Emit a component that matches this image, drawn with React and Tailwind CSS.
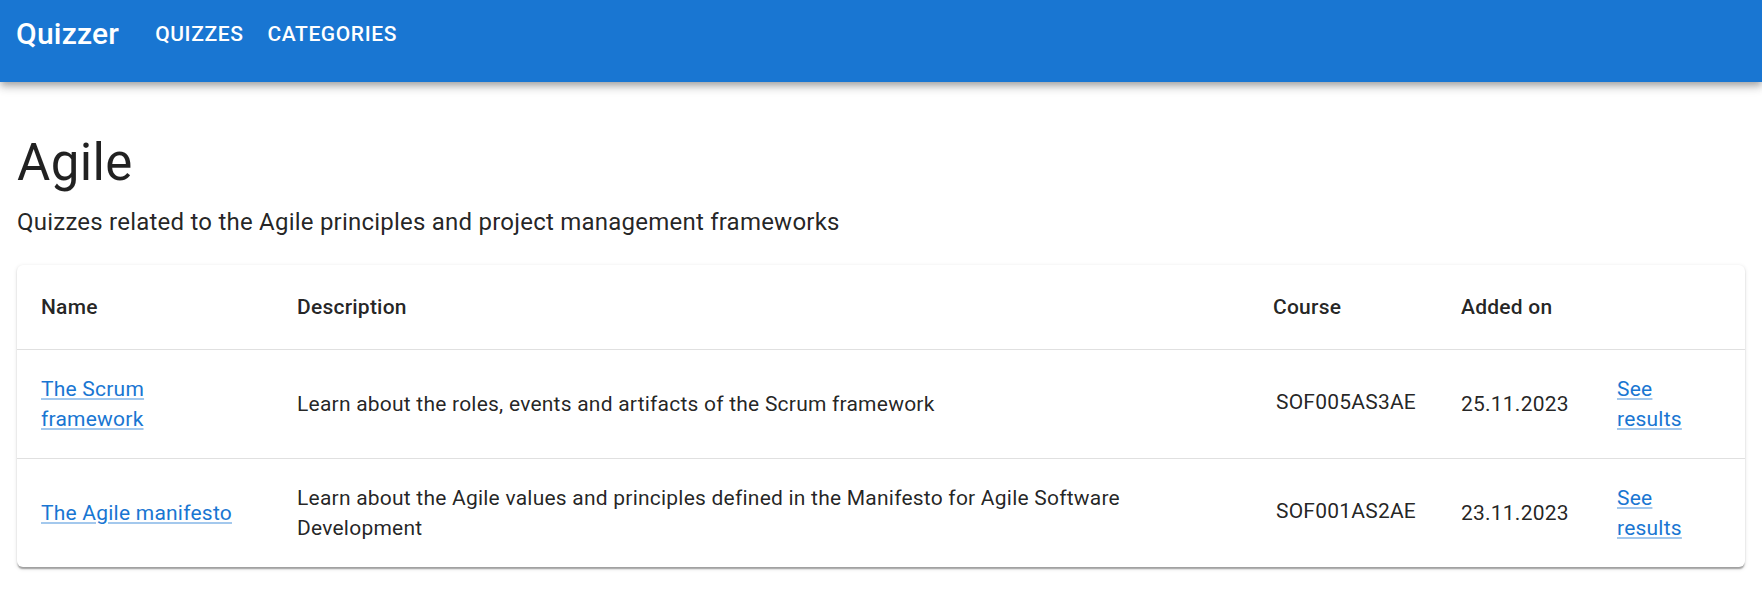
import React from "react";

const rows = [
  {
    name: "The Scrum framework",
    description: "Learn about the roles, events and artifacts of the Scrum framework",
    course: "SOF005AS3AE",
    added: "25.11.2023",
  },
  {
    name: "The Agile manifesto",
    description:
      "Learn about the Agile values and principles defined in the Manifesto for Agile Software Development",
    course: "SOF001AS2AE",
    added: "23.11.2023",
  },
];

const linkCls =
  "text-[#1976d2] underline decoration-[rgba(25,118,210,0.4)] underline-offset-[2px] cursor-pointer";

export default function App() {
  return (
    <div
      className="min-h-[591px] bg-white text-[rgba(0,0,0,0.87)]"
      style={{ fontFamily: "Roboto, 'Liberation Sans', Arial, sans-serif" }}
    >
      <header className="relative z-10 h-[82px] bg-[#1976d2] text-white shadow-[0_3px_6px_-1.5px_rgba(0,0,0,0.2),0_6px_7.5px_0_rgba(0,0,0,0.14),0_1.5px_15px_0_rgba(0,0,0,0.12)]">
        <div className="flex h-[68px] items-center px-[16px]">
          <div className="mr-[24px] text-[30px] font-medium leading-[1.6] tracking-[0.0075em]">
            Quizzer
          </div>
          <nav className="flex items-center">
            <button className="px-[12px] py-[9px] text-[21px] font-medium uppercase leading-[1.75] tracking-[0.02857em] text-white">
              Quizzes
            </button>
            <button className="px-[12px] py-[9px] text-[21px] font-medium uppercase leading-[1.75] tracking-[0.02857em] text-white">
              Categories
            </button>
          </nav>
        </div>
      </header>

      <main className="px-[17px] pt-[49px]">
        <h1 className="text-[51px] font-normal leading-[63px] tracking-[0.00735em]">Agile</h1>
        <p className="mt-[10px] text-[24px] leading-[36px] tracking-[0.00938em]">
          Quizzes related to the Agile principles and project management frameworks
        </p>

        <div className="mt-[25px] overflow-hidden rounded-[6px] bg-white shadow-[0_3px_1.5px_-1.5px_rgba(0,0,0,0.2),0_1.5px_1.5px_0_rgba(0,0,0,0.14),0_1.5px_4.5px_0_rgba(0,0,0,0.12)]">
          <table className="w-full table-fixed border-collapse text-left">
            <colgroup>
              <col className="w-[256px]" />
              <col className="w-[976px]" />
              <col className="w-[188px]" />
              <col className="w-[156px]" />
              <col className="w-[152px]" />
            </colgroup>
            <thead>
              <tr>
                {["Name", "Description", "Course", "Added on", ""].map((h, i) => (
                  <th
                    key={i}
                    className="border-b border-[#e0e0e0] p-[24px] text-[21px] font-medium leading-[36px] tracking-[0.01071em]"
                  >
                    {h}
                  </th>
                ))}
              </tr>
            </thead>
            <tbody>
              {rows.map((r, i) => (
                <tr key={i}>
                  <td
                    className={`p-[24px] align-middle text-[21px] leading-[30px] tracking-[0.01071em] ${
                      i === 0 ? "border-b border-[#e0e0e0]" : ""
                    }`}
                  >
                    <span className={linkCls}>{r.name}</span>
                  </td>
                  <td
                    className={`p-[24px] align-middle text-[21px] leading-[30px] tracking-[0.01071em] ${
                      i === 0 ? "border-b border-[#e0e0e0]" : ""
                    }`}
                  >
                    {r.description}
                  </td>
                  <td
                    className={`p-[24px] align-middle text-[21px] leading-[30px] tracking-[0.01071em] ${
                      i === 0 ? "border-b border-[#e0e0e0]" : ""
                    }`}
                  >
                    <span className="relative -top-[2px] ml-[3px]">{r.course}</span>
                  </td>
                  <td
                    className={`p-[24px] align-middle text-[21px] leading-[30px] tracking-[0.01071em] ${
                      i === 0 ? "border-b border-[#e0e0e0]" : ""
                    }`}
                  >
                    {r.added}
                  </td>
                  <td
                    className={`p-[24px] align-middle text-[21px] leading-[30px] tracking-[0.01071em] ${
                      i === 0 ? "border-b border-[#e0e0e0]" : ""
                    }`}
                  >
                    <span className={linkCls}>See results</span>
                  </td>
                </tr>
              ))}
            </tbody>
          </table>
        </div>
      </main>
    </div>
  );
}
